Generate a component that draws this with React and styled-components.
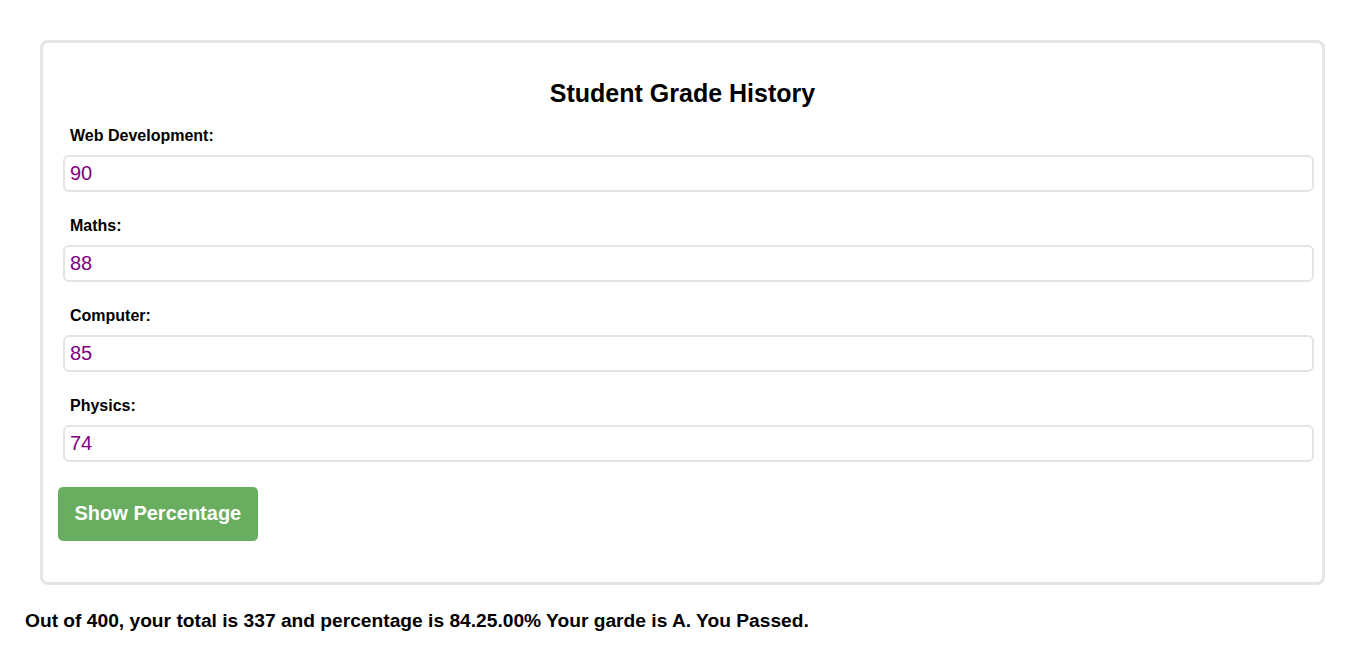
import React from "react";
import styled, { createGlobalStyle } from "styled-components";

const GlobalStyle = createGlobalStyle`
  html, body {
    margin: 0;
    padding: 0;
    background: #ffffff;
    font-family: "Liberation Sans", Arial, Helvetica, sans-serif;
    color: #000000;
  }
  * { box-sizing: border-box; }
`;

const Page = styled.div`
  padding: 40px 41px 0 40px;
`;

const Card = styled.div`
  border: 3px solid #e7e4e4;
  border-radius: 8px;
  padding: 15px;
`;

const Title = styled.h2`
  margin: 21px 0 18.5px;
  text-align: center;
  font-size: 25px;
  font-weight: bold;
  line-height: normal;
`;

const Field = styled.div`
  display: flex;
  flex-direction: column;
  margin-bottom: 25px;
`;

const Label = styled.label`
  display: block;
  margin: 0 0 10px 12px;
  font-size: 16px;
  font-weight: bold;
  line-height: 18px;
`;

const Input = styled.input`
  display: block;
  margin-left: 5px;
  width: calc(100% + 2px);
  height: 37px;
  padding: 0 5px;
  border: 2px solid #e6e3e3;
  border-radius: 6px;
  font-family: "Liberation Sans", Arial, sans-serif;
  font-size: 20px;
  color: #800080;
  background: #ffffff;
  outline: none;
`;

const Button = styled.button`
  display: inline-block;
  align-self: flex-start;
  margin: 0 0 26px 0;
  padding: 15.5px 16.5px;
  border: none;
  border-radius: 5px;
  background: #68ad60;
  color: #ffffff;
  font-family: "Liberation Sans", Arial, sans-serif;
  font-size: 20px;
  font-weight: bold;
  line-height: normal;
  cursor: pointer;
`;

const Result = styled.p`
  margin: 25px 0 0;
  padding-left: 25px;
  font-size: 19.2px;
  font-weight: bold;
  line-height: normal;
`;

const subjects = [
  { id: "web", label: "Web Development:", value: "90" },
  { id: "maths", label: "Maths:", value: "88" },
  { id: "computer", label: "Computer:", value: "85" },
  { id: "physics", label: "Physics:", value: "74" },
];

export default function App() {
  return (
    <>
      <GlobalStyle />
      <Page>
        <Card>
          <Title>Student Grade History</Title>
          {subjects.map((s) => (
            <Field key={s.id}>
              <Label htmlFor={s.id}>{s.label}</Label>
              <Input id={s.id} type="text" defaultValue={s.value} />
            </Field>
          ))}
          <Button type="button">Show Percentage</Button>
        </Card>
      </Page>
      <Result>
        Out of 400, your total is 337 and percentage is 84.25.00% Your garde is A. You Passed.
      </Result>
    </>
  );
}
